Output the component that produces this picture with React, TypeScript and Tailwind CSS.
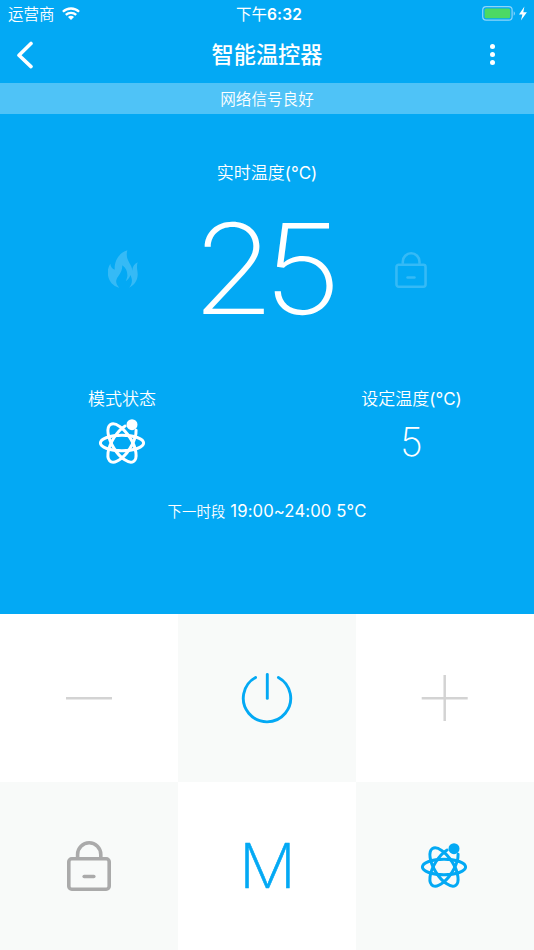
import clsx from "clsx"

const AtomIcon = ({ className }: { className?: string }) => (
  <svg className={clsx("w-12 h-12", className)} viewBox="-24 -24 48 48" fill="none" stroke="currentColor" strokeWidth={3} strokeLinecap="round">
    <ellipse rx="21.6" ry="7.8" />
    <ellipse rx="21.7" ry="9.6" transform="rotate(58)" />
    <path d="M18.2 5.2A21.7 9.6 0 1 1 16.1 -6.4" transform="rotate(-58)" />
    <circle cx="10" cy="-18.3" r="5.5" fill="currentColor" stroke="none" />
  </svg>
)

const LockIcon = ({ className }: { className?: string }) => (
  <svg className={className} viewBox="0 0 44 50" fill="none" stroke="currentColor" strokeWidth={3.6} strokeLinecap="round">
    <rect x="1.8" y="17.8" width="40.4" height="30.4" rx="3" />
    <path d="M10.6 16V13.4a11.6 11.6 0 0 1 23.2 0V16" strokeLinecap="butt" />
    <path d="M17.2 35.5h9.6" />
  </svg>
)

const FlameIcon = () => (
  <svg className="w-[30px] h-[38px] text-white/20" viewBox="54 299 90 114" fill="currentColor">
    <path d="M112 300C86 308 73 332 74 358C66 355 62 348 61 340C51 355 52 373 57 386C62 399 74 409 88 412C76 400 76 390 85 378C93 367 97 358 97 345C108 352 113 365 112 378C111 384 109 389 107 393C114 388 119 382 121 374C129 389 126 403 117 412C132 406 142 392 143 375C144 361 138 352 143 336C132 341 127 350 127 361C126 340 104 330 112 300Z" />
  </svg>
)

const StatusBar = () => (
  <div className="grid grid-cols-3 items-center h-7 pt-px pl-2 pr-1.5 text-[15.5px] leading-7">
    <div className="flex items-center gap-[7px]">
      <span>运营商</span>
      <svg className="w-[18px] h-[13px] -mt-1" viewBox="0 0 18 13" fill="none" stroke="currentColor" strokeWidth={2.3}>
        <path d="M.9 4.8a11.6 11.6 0 0 1 16.2 0" />
        <path d="M3.8 7.9a7.5 7.5 0 0 1 10.4 0" />
        <path d="M9 13 6 10a4.2 4.2 0 0 1 6 0z" fill="currentColor" stroke="none" />
      </svg>
    </div>
    <span className="pl-0.5 text-center font-semibold tracking-[0.2px]"><span className="font-normal tracking-normal">下午</span>6:32</span>
    <svg className="w-[46px] h-[15px] -mt-[3px] justify-self-end" viewBox="0 0 46 15">
      <rect x=".7" y=".7" width="29.4" height="13.4" rx="3.4" fill="none" stroke="#8dd6fa" strokeWidth="1.2" />
      <rect x="2.6" y="2.6" width="25.6" height="9.6" rx="1.5" fill="#4cd964" />
      <path d="M31.7 5.2c1.7.7 1.7 3.8 0 4.5z" fill="#8dd6fa" />
      <path d="M42.4.6 37 8.4h3.4l-1.5 6.2 6-8.4h-3.6z" fill="#fff" />
    </svg>
  </div>
)

const NavBar = () => (
  <div className="grid grid-cols-3 items-center h-[55px] pb-0.5 pl-4 pr-[38px]">
    <svg className="w-[18px] h-7" viewBox="0 0 18 28" fill="none" stroke="currentColor" strokeWidth={3.6} strokeLinecap="round" strokeLinejoin="round">
      <path d="M15 2.5 3 14.2 15 25.6" />
    </svg>
    <h1 className="pl-[22px] text-center text-[22.2px] leading-7 font-medium">智能温控器</h1>
    <div className="flex flex-col items-center justify-self-end gap-[2.5px] w-[7px]">
      <i className="w-[5.5px] h-[5.5px] rounded-full bg-white" />
      <i className="w-[5.5px] h-[5.5px] rounded-full bg-white" />
      <i className="w-[5.5px] h-[5.5px] rounded-full bg-white" />
    </div>
  </div>
)

const Controls = () => {
  const controls = [
    {
      name: "minus",
      icon: (
        <svg className="w-12 h-12 text-[#d3d3d3]" viewBox="0 0 48 48" stroke="currentColor" strokeWidth={2.5}>
          <path d="M1 24.2h46" />
        </svg>
      )
    },
    {
      name: "power",
      icon: (
        <svg className="w-[52px] h-[52px] text-[#03a9f4]" viewBox="0 0 52 52" fill="none" stroke="currentColor" strokeWidth={2.9} strokeLinecap="round">
          <path d="M14.6 5.4a23.7 23.7 0 1 0 22.8 0" />
          <path d="M26.3 2.4v24" />
        </svg>
      )
    },
    {
      name: "plus",
      icon: (
        <svg className="w-12 h-12 text-[#d3d3d3]" viewBox="0 0 48 48" stroke="currentColor" strokeWidth={2.5}>
          <path d="M.7 24.2h46M23.7 1v46" />
        </svg>
      )
    },
    { name: "lock", icon: <LockIcon className="w-11 h-[50px] text-[#aaaaaa]" /> },
    {
      name: "mode",
      icon: <span className="scale-x-[1.04] text-[61px] leading-[62px] font-[250] text-[#03a9f4] [-webkit-text-stroke:0.6px_#03a9f4]">M</span>
    },
    { name: "atom", icon: <AtomIcon className="mt-[2px] mr-[2px] text-[#03a9f4]" /> }
  ]

  return (
    <div className="grid grid-cols-3 grid-rows-2 h-[336px]">
      {controls.map((control, index) => (
        <button
          key={control.name}
          aria-label={control.name}
          className={clsx("flex items-center justify-center", index % 2 === 0 ? "bg-white" : "bg-[#f8faf9]")}
        >
          {control.icon}
        </button>
      ))}
    </div>
  )
}

export default function App() {
  return (
    <div className="w-[534px] h-[950px] overflow-hidden font-['Inter','Noto_Sans_CJK_SC',sans-serif] font-[350]">
      <div className="h-[614px] bg-[#03a9f4] text-white">
        <StatusBar />
        <NavBar />
        <div className="h-[31px] pt-px bg-[#4fc3f7] text-center text-[15.6px] leading-[31px]">网络信号良好</div>

        {/* Current temperature */}
        <p className="pt-[47px] text-center text-[17px] leading-6">实时温度<span className="font-normal">(°C)</span></p>
        <div className="grid grid-cols-[178px_1fr_178px] items-center h-[168px]">
          <div className="flex justify-end pr-10">
            <FlameIcon />
          </div>
          <span className="-mt-px pr-[11px] text-center text-[125px] leading-[165px] font-extralight tracking-[-10.5px] scale-x-[1.08] [font-optical-sizing:none]">25</span>
          <div className="pt-px pl-[39px]">
            <LockIcon className="w-8 h-9 text-white/20" />
          </div>
        </div>

        {/* Mode and target temperature */}
        <div className="flex justify-between pt-[34px] pl-[72px] pr-[72px]">
          <div className="flex flex-col items-center w-[100px]">
            <p className="text-[17px] leading-6">模式状态</p>
            <AtomIcon className="mt-2" />
          </div>
          <div className="flex flex-col items-center w-[101px]">
            <p className="whitespace-nowrap text-[17px] leading-6">设定温度<span className="font-normal">(°C)</span></p>
            <span className="mt-[7px] text-[39px] leading-[48px] font-extralight [font-optical-sizing:none]">5</span>
          </div>
        </div>

        <p className="pt-8 text-center text-[16.7px] leading-6 tracking-[0.1px] font-normal">
          <span className="text-[14.4px] font-[350]">下一时段</span> 19:00~24:00 5°C
        </p>
      </div>
      <Controls />
    </div>
  )
}
